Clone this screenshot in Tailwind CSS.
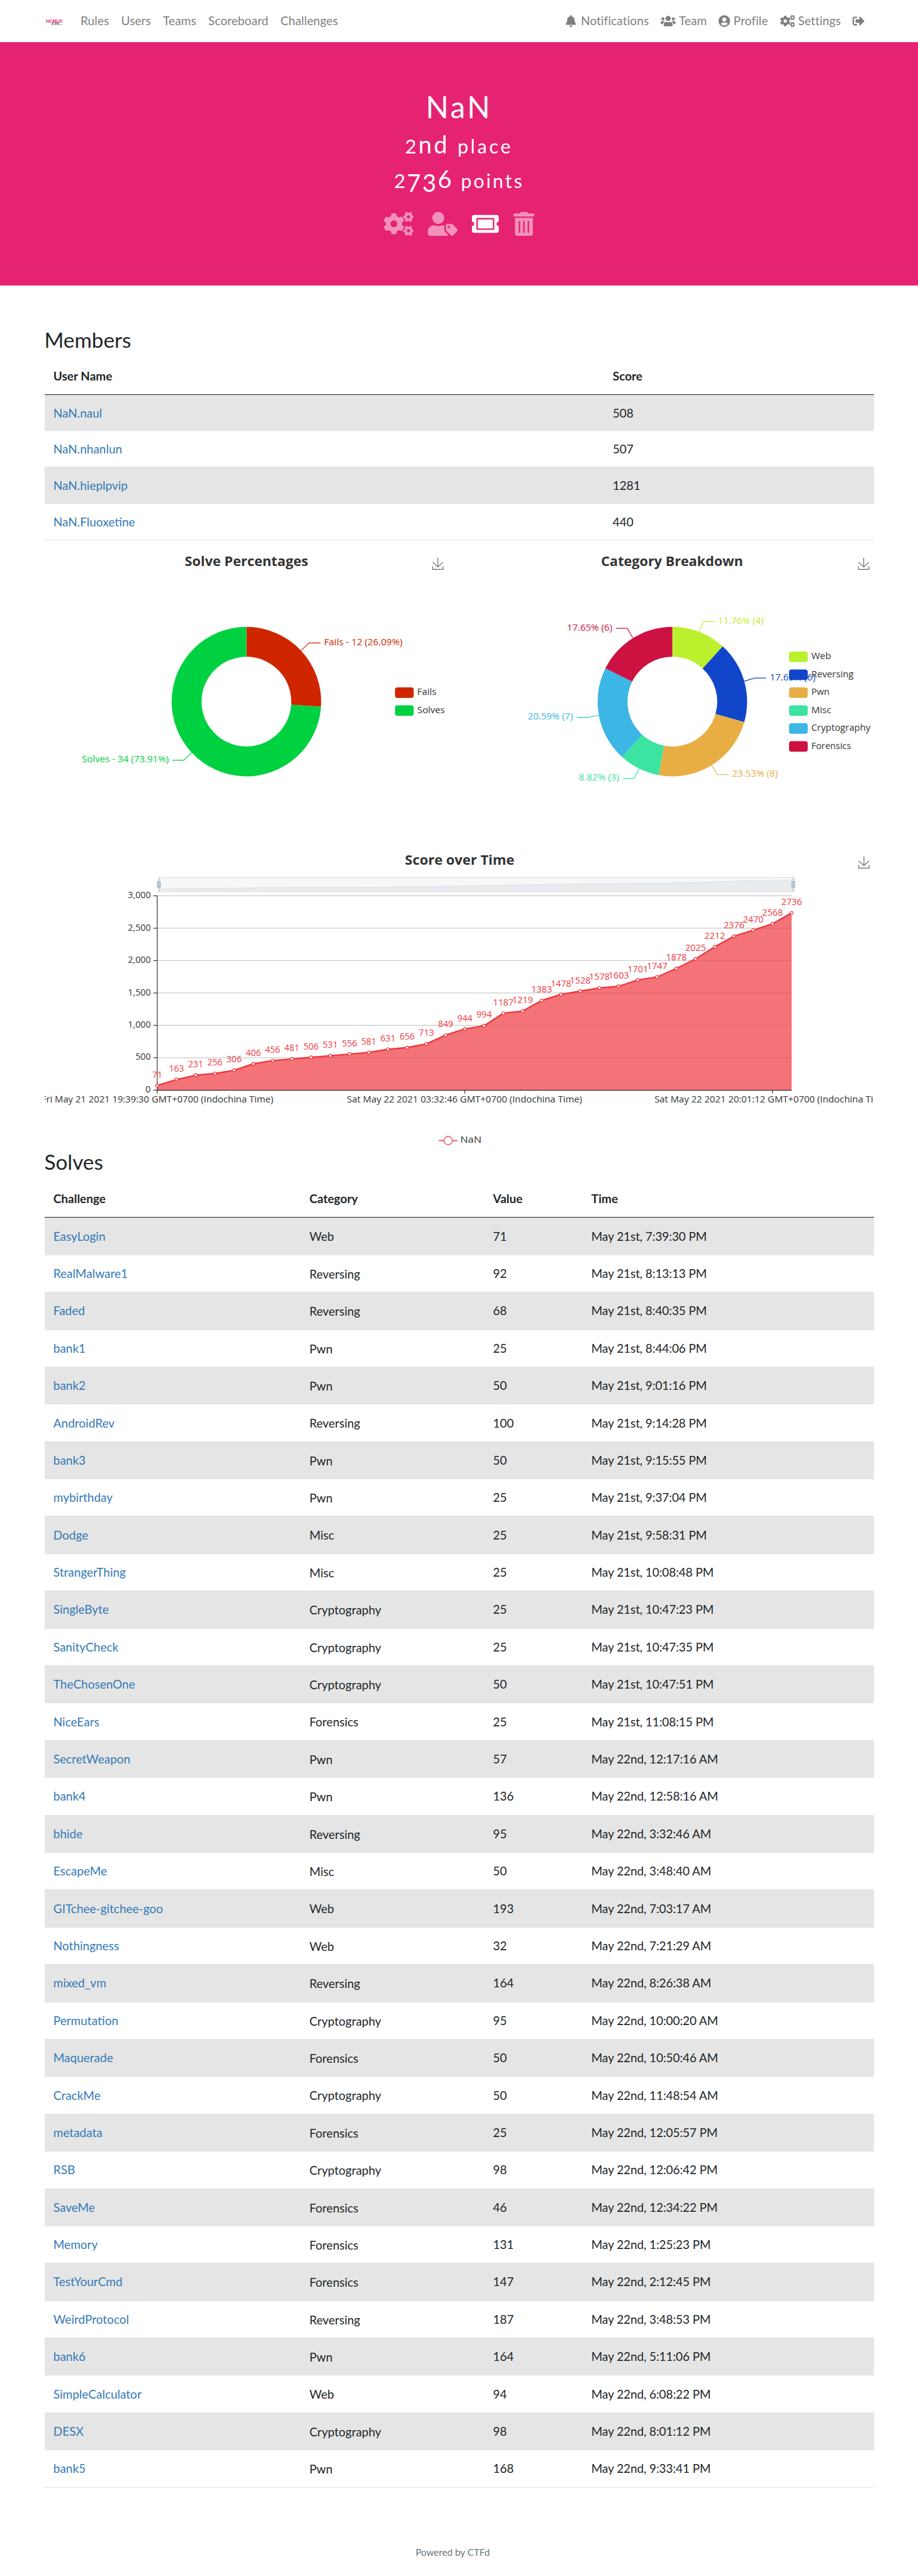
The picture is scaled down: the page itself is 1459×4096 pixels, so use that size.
<!DOCTYPE html>
<html lang="en">
<head>
<meta charset="utf-8">
<title>NaN - HCMUS CTF</title>
<script src="https://cdn.jsdelivr.net/npm/@tailwindcss/browser@4"></script>
</head>
<body class="bg-white font-['Lato',sans-serif] text-[19px] leading-[28.5px] text-[#212529] overflow-x-hidden">

<svg width="0" height="0" class="absolute">
  <defs>
    <symbol id="cogs" viewBox="0 0 640 512"><path fill="currentColor" d="M512.1 191l-8.2 14.3c-3 5.3-9.4 7.5-15.1 5.4-11.8-4.4-22.6-10.7-32.1-18.6-4.6-3.8-5.8-10.5-2.8-15.7l8.2-14.3c-6.9-8-12.3-17.3-15.9-27.4h-16.5c-6 0-11.2-4.3-12.2-10.3-2-12-2.1-24.6 0-37.1 1-6 6.2-10.4 12.2-10.4h16.5c3.6-10.1 9-19.4 15.9-27.4l-8.2-14.3c-3-5.2-1.9-11.9 2.8-15.7 9.5-7.9 20.4-14.2 32.1-18.6 5.700-2.100 12.100.1 15.100 5.400l8.200 14.300c10.500-1.900 21.200-1.900 31.700 0L552 6.300c3-5.300 9.400-7.500 15.100-5.400 11.800 4.400 22.600 10.700 32.100 18.600 4.600 3.800 5.800 10.500 2.800 15.700l-8.200 14.300c6.900 8 12.300 17.300 15.900 27.400h16.500c6 0 11.200 4.300 12.200 10.300 2 12 2.100 24.600 0 37.100-1 6-6.200 10.400-12.200 10.400h-16.500c-3.600 10.100-9 19.400-15.900 27.400l8.200 14.300c3 5.200 1.900 11.900-2.800 15.700-9.500 7.900-20.400 14.200-32.100 18.600-5.700 2.100-12.100-.1-15.100-5.400l-8.200-14.300c-10.400 1.900-21.200 1.900-31.700 0zm-10.500-58.800c38.500 29.600 82.400-14.300 52.800-52.800-38.500-29.700-82.400 14.300-52.800 52.800zM386.300 286.100l33.700 16.800c10.100 5.800 14.500 18.100 10.500 29.100-8.900 24.200-26.400 46.400-42.600 65.800-7.400 8.900-20.200 11.100-30.300 5.300l-29.100-16.800c-16 13.700-34.600 24.600-54.900 31.700v33.600c0 11.600-8.300 21.600-19.700 23.600-24.600 4.200-50.400 4.400-75.900 0-11.500-2-20-11.900-20-23.600V418c-20.300-7.200-38.900-18-54.900-31.700L74 403c-10 5.800-22.900 3.600-30.300-5.300-16.200-19.400-33.300-41.600-42.200-65.700-4-10.900.4-23.200 10.500-29.100l33.300-16.800c-3.900-20.900-3.900-42.400 0-63.400L12 205.800c-10.100-5.800-14.600-18.100-10.500-29 8.900-24.200 26-46.400 42.200-65.800 7.400-8.900 20.200-11.100 30.300-5.300l29.100 16.800c16-13.700 34.600-24.600 54.900-31.700V57.100c0-11.500 8.200-21.500 19.600-23.500 24.600-4.200 50.500-4.400 76-.1 11.500 2 20 11.900 20 23.600v33.600c20.300 7.200 38.900 18 54.900 31.700l29.100-16.800c10-5.800 22.900-3.600 30.300 5.300 16.200 19.400 33.200 41.600 42.100 65.800 4 10.900.1 23.200-10 29.100l-33.700 16.800c3.900 21 3.900 42.500 0 63.500zm-117.600 21.100c59.200-77-28.700-164.900-105.700-105.700-59.200 77 28.700 164.900 105.700 105.700zm243.400 182.700l-8.200 14.300c-3 5.300-9.400 7.500-15.100 5.400-11.800-4.400-22.600-10.700-32.100-18.600-4.600-3.800-5.800-10.500-2.800-15.700l8.200-14.300c-6.900-8-12.300-17.300-15.900-27.400h-16.500c-6 0-11.200-4.300-12.200-10.300-2-12-2.100-24.600 0-37.100 1-6 6.200-10.400 12.200-10.400h16.500c3.600-10.100 9-19.400 15.900-27.400l-8.200-14.300c-3-5.200-1.900-11.900 2.800-15.700 9.500-7.900 20.400-14.200 32.100-18.600 5.700-2.100 12.100.1 15.100 5.400l8.200 14.300c10.500-1.900 21.200-1.900 31.700 0l8.200-14.300c3-5.300 9.400-7.500 15.100-5.400 11.800 4.400 22.600 10.700 32.100 18.600 4.600 3.800 5.800 10.500 2.800 15.700l-8.200 14.300c6.900 8 12.300 17.300 15.900 27.400h16.500c6 0 11.200 4.300 12.200 10.300 2 12 2.100 24.600 0 37.100-1 6-6.200 10.400-12.200 10.400h-16.500c-3.600 10.100-9 19.400-15.900 27.400l8.200 14.300c3 5.200 1.900 11.900-2.800 15.700-9.500 7.900-20.400 14.200-32.100 18.600-5.700 2.100-12.100-.1-15.100-5.400l-8.200-14.300c-10.400 1.900-21.200 1.900-31.700 0zM501.600 431c38.500 29.600 82.400-14.300 52.800-52.800-38.500-29.600-82.400 14.300-52.800 52.800z"/></symbol>
    <symbol id="usertag" viewBox="0 0 640 512"><path fill="currentColor" d="M630.6 364.9l-90.3-90.2c-12-12-28.3-18.7-45.3-18.7h-79.3c-17.7 0-32 14.3-32 32v79.2c0 17 6.7 33.2 18.7 45.2l90.3 90.2c12.5 12.5 32.8 12.5 45.3 0l92.5-92.5c12.6-12.5 12.6-32.700.1-45.200zm-182.800-21c-13.300 0-24-10.700-24-24s10.700-24 24-24 24 10.700 24 24c0 13.200-10.700 24-24 24zm-223.800-88c70.700 0 128-57.300 128-128C352 57.300 294.700 0 224 0S96 57.300 96 128c0 70.600 57.300 127.900 128 127.900zm127.800 111.200V294c-12.200-3.600-24.900-6.200-38.200-6.200h-16.700c-22.200 10.200-46.900 16-72.900 16s-50.600-5.800-72.900-16h-16.700C60.200 287.900 0 348.100 0 422.300v41.600c0 26.500 21.500 48 48 48h352c15.500 0 29.100-7.500 37.900-18.900l-58-58c-18.100-18.100-28.100-42.200-28.100-67.900z"/></symbol>
    <symbol id="ticket" viewBox="0 0 576 512"><path fill="currentColor" d="M128 160h320v192H128V160zm400 96c0 26.51 21.49 48 48 48v96c0 26.51-21.49 48-48 48H48c-26.510 0-48-21.490-48-48v-96c26.510 0 48-21.490 48-48s-21.490-48-48-48v-96c0-26.510 21.490-48 48-48h480c26.510 0 48 21.490 48 48v96c-26.510 0-48 21.490-48 48zm-48-104c0-13.255-10.745-24-24-24H120c-13.255 0-24 10.745-24 24v208c0 13.255 10.745 24 24 24h336c13.255 0 24-10.745 24-24V152z"/></symbol>
    <symbol id="trash" viewBox="0 0 448 512"><path fill="currentColor" d="M32 464a48 48 0 0 0 48 48h288a48 48 0 0 0 48-48V128H32zm272-256a16 16 0 0 1 32 0v224a16 16 0 0 1-32 0zm-96 0a16 16 0 0 1 32 0v224a16 16 0 0 1-32 0zm-96 0a16 16 0 0 1 32 0v224a16 16 0 0 1-32 0zM432 32H312l-9.400-18.700A24 24 0 0 0 281.100 0H166.800a23.720 23.720 0 0 0-21.400 13.300L136 32H16A16 16 0 0 0 0 48v32a16 16 0 0 0 16 16h416a16 16 0 0 0 16-16V48a16 16 0 0 0-16-16z"/></symbol>
    <symbol id="bell" viewBox="0 0 448 512"><path fill="currentColor" d="M224 512c35.320 0 63.970-28.650 63.970-64H160.030c0 35.350 28.650 64 63.970 64zm215.390-149.710c-19.320-20.760-55.470-51.990-55.470-154.290 0-77.700-54.480-139.900-127.940-155.160V32c0-17.670-14.320-32-31.980-32s-31.980 14.330-31.980 32v20.840C118.560 68.100 64.080 130.300 64.080 208c0 102.300-36.150 133.530-55.470 154.290-6 6.450-8.660 14.160-8.610 21.710.11 16.400 12.980 32 32.100 32h383.800c19.120 0 32-15.600 32.100-32 .05-7.550-2.610-15.270-8.610-21.710z"/></symbol>
    <symbol id="users" viewBox="0 0 640 512"><path fill="currentColor" d="M96 224c35.300 0 64-28.700 64-64s-28.700-64-64-64-64 28.700-64 64 28.700 64 64 64zm448 0c35.300 0 64-28.700 64-64s-28.700-64-64-64-64 28.700-64 64 28.700 64 64 64zm32 32h-64c-17.600 0-33.500 7.100-45.100 18.600 40.300 22.100 68.900 62 75.100 109.400h66c17.700 0 32-14.300 32-32v-32c0-35.300-28.700-64-64-64zm-256 0c61.900 0 112-50.100 112-112S381.900 32 320 32 208 82.100 208 144s50.100 112 112 112zm76.800 32h-8.300c-20.800 10-43.900 16-68.500 16s-47.600-6-68.500-16h-8.300C179.600 288 128 339.600 128 403.200V432c0 26.500 21.500 48 48 48h288c26.500 0 48-21.500 48-48v-28.800c0-63.600-51.600-115.200-115.200-115.200zm-223.700-13.400C161.500 263.100 145.600 256 128 256H64c-35.300 0-64 28.700-64 64v32c0 17.700 14.300 32 32 32h65.900c6.300-47.400 34.900-87.300 75.200-109.400z"/></symbol>
    <symbol id="usercircle" viewBox="0 0 496 512"><path fill="currentColor" d="M248 8C111 8 0 119 0 256s111 248 248 248 248-111 248-248S385 8 248 8zm0 96c48.600 0 88 39.400 88 88s-39.400 88-88 88-88-39.400-88-88 39.400-88 88-88zm0 344c-58.700 0-111.300-26.600-146.500-68.200 18.800-35.400 55.600-59.800 98.500-59.800 2.400 0 4.800.4 7.100 1.100 13 4.200 26.600 6.900 40.900 6.900 14.300 0 28-2.700 40.900-6.900 2.300-.7 4.700-1.100 7.100-1.100 42.900 0 79.700 24.400 98.500 59.800C359.300 421.400 306.700 448 248 448z"/></symbol>
    <symbol id="signout" viewBox="0 0 512 512"><path fill="currentColor" d="M497 273L329 441c-15 15-41 4.500-41-17v-96H152c-13.300 0-24-10.700-24-24v-96c0-13.300 10.700-24 24-24h136V88c0-21.400 25.900-32 41-17l168 168c9.300 9.400 9.300 24.600 0 34zM192 436v-40c0-6.600-5.400-12-12-12H96c-17.700 0-32-14.300-32-32V160c0-17.700 14.300-32 32-32h84c6.600 0 12-5.400 12-12V76c0-6.600-5.400-12-12-12H96c-53 0-96 43-96 96v192c0 53 43 96 96 96h84c6.600 0 12-5.400 12-12z"/></symbol>
    <symbol id="download" viewBox="0 0 24 26"><path fill="none" stroke="#666" stroke-width="1.5" d="M12 1V19.500M1.500 10L12 19.500L22.500 10M1.500 18V24.500H22.500V18"/></symbol>
  </defs>
</svg>

<nav class="flex h-[66.5px] items-center pl-[70.500px] pr-[84.700px] tracking-[0.1px] text-[#7f7f7f]">
  <svg class="h-[22px] w-[57.500px] shrink-0 overflow-visible tracking-normal" viewBox="0 0 57.500 22">
    <text x="2" y="14.200" class="font-['Liberation_Sans'] text-[7px] font-bold italic" fill="#e62272" textLength="26" lengthAdjust="spacingAndGlyphs">HCMUS</text>
    <text x="11" y="18.200" class="font-['Liberation_Sans'] text-[5px] font-bold italic" fill="#333" textLength="12" lengthAdjust="spacingAndGlyphs">CTF</text>
    <path d="M21.500 16.800H28" stroke="#999" stroke-width="1"/>
  </svg>
  <div class="flex gap-[19.200px]">
    <a>Rules</a><a>Users</a><a>Teams</a><a>Scoreboard</a><a>Challenges</a>
  </div>
  <div class="ml-auto flex items-center gap-[19px]">
    <a class="flex items-center gap-[7.500px]"><svg class="h-[19px] w-[16.600px]"><use href="#bell"/></svg>Notifications</a>
    <a class="flex items-center gap-[5px]"><svg class="h-[19px] w-[23.800px]"><use href="#users"/></svg>Team</a>
    <a class="flex items-center gap-[5px]"><svg class="h-[19px] w-[18.400px]"><use href="#usercircle"/></svg>Profile</a>
    <a class="flex items-center gap-[5px]"><svg class="h-[19px] w-[23.800px]"><use href="#cogs"/></svg>Settings</a>
    <svg class="h-[19px] w-[19px]"><use href="#signout"/></svg>
  </div>
</nav>

<header class="flex h-[387.300px] flex-col items-center bg-[#e62272] pt-[74.300px] text-white">
  <h1 class="mb-[9.500px] h-[57px] text-[47.500px] leading-[57px] tracking-[3.500px]">NaN</h1>
  <h2 class="mb-[9.500px] h-[45.600px] text-[38px] leading-[45.600px] tracking-[3.300px]"><span class="text-[31px] leading-none">2</span>nd <small class="text-[30.400px] leading-none tracking-[3.700px]">place</small></h2>
  <h2 class="h-[45.600px] text-[38px] leading-[45.600px] tracking-[2.500px]"><span class="text-[31px] leading-none">2</span><span class="relative top-[6px] leading-none">73</span>6 <small class="text-[30.400px] leading-none tracking-[3px]">points</small></h2>
  <div class="mt-[29.500px] flex gap-[22.800px]">
    <svg class="h-[38px] w-[47.500px] opacity-50"><use href="#cogs"/></svg>
    <svg class="h-[38px] w-[47.500px] opacity-50"><use href="#usertag"/></svg>
    <svg class="h-[38px] w-[42.800px]"><use href="#ticket"/></svg>
    <svg class="h-[38px] w-[33.300px] opacity-50"><use href="#trash"/></svg>
  </div>
</header>

<main class="ml-[70.500px] w-[1318.700px] pt-[66.500px]">
  <h3 class="mb-[9.500px] h-[39.900px] pt-[0.500px] text-[33.270px] leading-[39.900px]">Members</h3>
  <div id="members">
    <div class="grid h-[57.820px] grid-cols-[889px_1fr] border-b border-[#212529] pt-[14.800px] font-bold">
      <div class="pl-[14.260px]">User Name</div><div class="pl-[14.260px]">Score</div>
    </div>
  </div>

  <div class="grid grid-cols-2">
    <svg id="pie1" class="block h-[475.240px] w-full font-['Open_Sans'] text-[18.600px]" viewBox="89 1084 832.500 600"></svg>
    <svg id="pie2" class="block h-[475.240px] w-full font-['Open_Sans'] text-[18.600px]" viewBox="921.500 1084 832.500 600"></svg>
  </div>
  <svg id="line" class="block h-[493.600px] w-full overflow-hidden font-['Open_Sans'] text-[18.600px]" viewBox="89 1684 1665 623.200"></svg>

  <h3 class="mb-[9.500px] h-[39.900px] pt-[0.800px] text-[33.270px] leading-[39.900px]">Solves</h3>
  <div id="solves">
    <div class="grid h-[59.400px] grid-cols-[406.900px_291.800px_156.400px_1fr] border-b border-[#212529] pt-[15px] font-bold">
      <div class="pl-[14.260px]">Challenge</div><div class="pl-[14.260px]">Category</div><div class="pl-[14.260px]">Value</div><div class="pl-[14.260px]">Time</div>
    </div>
  </div>
</main>
<footer class="pt-[91px] pr-[20px] text-center text-[15.200px] leading-[23px] text-[#6c757d]">Powered by CTFd</footer>

<script>
const members = [['NaN.naul', 508], ['NaN.nhanlun', 507], ['NaN.hieplpvip', 1281], ['NaN.Fluoxetine', 440]];
document.getElementById('members').insertAdjacentHTML('beforeend', members.map(([n, s]) => `
  <div class="grid h-[57.820px] grid-cols-[889px_1fr] border-b border-[#dee2e6] pt-[15px] odd:bg-white even:bg-[#e5e5e5]">
    <div class="pl-[14.260px] text-[#337ab7]">${n}</div><div class="pl-[14.260px]">${s}</div>
  </div>`).join(''));

const solves = `EasyLogin|Web|71|May 21st, 7:39:30 PM
RealMalware1|Reversing|92|May 21st, 8:13:13 PM
Faded|Reversing|68|May 21st, 8:40:35 PM
bank1|Pwn|25|May 21st, 8:44:06 PM
bank2|Pwn|50|May 21st, 9:01:16 PM
AndroidRev|Reversing|100|May 21st, 9:14:28 PM
bank3|Pwn|50|May 21st, 9:15:55 PM
mybirthday|Pwn|25|May 21st, 9:37:04 PM
Dodge|Misc|25|May 21st, 9:58:31 PM
StrangerThing|Misc|25|May 21st, 10:08:48 PM
SingleByte|Cryptography|25|May 21st, 10:47:23 PM
SanityCheck|Cryptography|25|May 21st, 10:47:35 PM
TheChosenOne|Cryptography|50|May 21st, 10:47:51 PM
NiceEars|Forensics|25|May 21st, 11:08:15 PM
SecretWeapon|Pwn|57|May 22nd, 12:17:16 AM
bank4|Pwn|136|May 22nd, 12:58:16 AM
bhide|Reversing|95|May 22nd, 3:32:46 AM
EscapeMe|Misc|50|May 22nd, 3:48:40 AM
GITchee-gitchee-goo|Web|193|May 22nd, 7:03:17 AM
Nothingness|Web|32|May 22nd, 7:21:29 AM
mixed_vm|Reversing|164|May 22nd, 8:26:38 AM
Permutation|Cryptography|95|May 22nd, 10:00:20 AM
Maquerade|Forensics|50|May 22nd, 10:50:46 AM
CrackMe|Cryptography|50|May 22nd, 11:48:54 AM
metadata|Forensics|25|May 22nd, 12:05:57 PM
RSB|Cryptography|98|May 22nd, 12:06:42 PM
SaveMe|Forensics|46|May 22nd, 12:34:22 PM
Memory|Forensics|131|May 22nd, 1:25:23 PM
TestYourCmd|Forensics|147|May 22nd, 2:12:45 PM
WeirdProtocol|Reversing|187|May 22nd, 3:48:53 PM
bank6|Pwn|164|May 22nd, 5:11:06 PM
SimpleCalculator|Web|94|May 22nd, 6:08:22 PM
DESX|Cryptography|98|May 22nd, 8:01:12 PM
bank5|Pwn|168|May 22nd, 9:33:41 PM`.split('\n').map(r => r.split('|'));
document.getElementById('solves').insertAdjacentHTML('beforeend', solves.map(([n, c, v, t]) => `
  <div class="grid h-[59.406px] grid-cols-[406.900px_291.800px_156.400px_1fr] border-b border-[#dee2e6] pt-[15.200px] odd:bg-white even:bg-[#e5e5e5]">
    <div class="pl-[14.260px] text-[#337ab7]">${n}</div><div class="pl-[14.260px] pt-[0.800px]">${c}</div><div class="pl-[14.260px]">${v}</div><div class="pl-[14.260px] tracking-[-0.1px]">${t}</div>
  </div>`).join(''));

// text run spanning x1..x2
const T = (x1, x2, y, s, fill = '#333', extra = '') =>
  `<text x="${x1}" y="${y}" fill="${fill}" textLength="${x2 - x1}" lengthAdjust="spacingAndGlyphs" ${extra}>${s}</text>`;
const title = (x1, x2, y, s) => T(x1, x2, y, s, '#333', 'class="text-[27px] font-bold"');
const dl = (x, y) => `<use href="#download" x="${x}" y="${y}" width="24" height="26"/>`;
const leader = (p, c) => `<polyline points="${p}" fill="none" stroke="${c}" stroke-width="1.5"/>`;
const swatch = (x, y, c) => `<rect x="${x}" y="${y}" width="37.500" height="21" rx="5" fill="${c}"/>`;
function donut(cx, cy, R, r, data) {
  const total = data.reduce((a, d) => a + d[0], 0);
  let a = 0;
  const p = (q, t) => `${(cx + q * Math.sin(t)).toFixed(2)} ${(cy - q * Math.cos(t)).toFixed(2)}`;
  return data.map(([v, c]) => {
    const b = a + v / total * 2 * Math.PI, big = b - a > Math.PI ? 1 : 0;
    const d = `M${p(R, a)}A${R} ${R} 0 ${big} 1 ${p(R, b)}L${p(r, b)}A${r} ${r} 0 ${big} 0 ${p(r, a)}Z`;
    a = b;
    return `<path d="${d}" fill="${c}"/>`;
  }).join('');
}
const red = '#cf2600', green = '#00d140';
document.getElementById('pie1').innerHTML =
  title(370, 618, 1136, 'Solve Percentages') + dl(866, 1118) +
  donut(493.8, 1408, 150, 90, [[12, red], [34, green]]) +
  leader('603.5,1305.5 619.5,1290.2 642.5,1290.2', red) + T(649.5, 807, 1295.4, 'Fails - 12 (26.09%)', red) +
  leader('384.8,1510 368.1,1525.8 345.8,1525.8', green) + T(163.5, 338, 1530.2, 'Solves - 34 (73.91%)', green) +
  swatch(792, 1379.5, red) + T(836.5, 875, 1395.2, 'Fails') +
  swatch(792, 1415.5, green) + T(836.8, 892, 1431, 'Solves');

const C = { Web: '#bbf02c', Rev: '#1246ca', Pwn: '#e8ae44', Misc: '#3be4a0', Cry: '#3bb6e5', For: '#cd1140' };
document.getElementById('pie2').innerHTML =
  title(1206, 1491, 1136, 'Category Breakdown') + dl(1721, 1118) +
  donut(1349, 1408, 150, 90, [[4, C.Web], [6, C.Rev], [8, C.Pwn], [3, C.Misc], [7, C.Cry], [6, C.For]]) +
  leader('1403,1268 1411.2,1247.3 1434.2,1247.3', C.Web) + T(1440.5, 1532, 1252, '11.76% (4)', C.Web) +
  leader('1493.4,1367 1514.3,1360.6 1537.2,1360.6', C.Rev) + T(1544.5, 1636, 1366, '17.65% (6)', C.Rev) +
  leader('1427.6,1535.6 1439.8,1554.6 1462.2,1554.6', C.Pwn) + T(1469, 1560.5, 1559, '23.53% (8)', C.Pwn) +
  leader('1282.1,1542.3 1272.4,1562.3 1250,1562.3', C.Misc) + T(1161.5, 1242, 1566.5, '8.82% (3)', C.Misc) +
  leader('1202,1435.3 1180,1439.5 1157.7,1439.5', C.Cry) + T(1059, 1149.5, 1444.2, '20.59% (7)', C.Cry) +
  leader('1269.9,1280.3 1258.7,1261 1236.2,1261', C.For) + T(1137.5, 1228.5, 1266, '17.65% (6)', C.For) +
  [['Web', 1667.5, C.Web], ['Reversing', 1712.5, C.Rev], ['Pwn', 1664.5, C.Pwn], ['Misc', 1668, C.Misc], ['Cryptography', 1746.5, C.Cry], ['Forensics', 1707.5, C.For]]
    .map(([n, e, c], i) => swatch(1583.2, 1307.5 + 36 * i, c) + T(1628, e, 1323.2 + 36 * i, n)).join('');

const scores = [71,163,231,256,306,406,456,481,506,531,556,581,631,656,713,849,944,994,1187,1219,1383,1478,1528,1578,1603,1701,1747,1878,2025,2212,2376,2470,2568,2736];
const X = i => +(314.9 + i * 38.58).toFixed(1), Y = v => +(2188.2 - v * 0.13).toFixed(1);
const pts = scores.map((v, i) => `${X(i)},${Y(v)}`).join(' ');
const mini = scores.map((v, i) => `${(318.3 + i * 38.576).toFixed(1)},${(1784.9 - v * 0.0068).toFixed(1)}`).join(' ');
const ink = '#ee383f';
const handle = x => `<path d="M${x} 1760.500V1790.500" stroke="#a7b7cc" stroke-width="1.500"/><rect x="${x - 3.7}" y="1769" width="7.400" height="13.200" fill="#a7b7cc"/><path d="M${x - 2} 1773.400h4M${x - 2} 1778h4" stroke="#fff" stroke-width="1.200"/>`;
let g = title(812, 1031.5, 1735.7, 'Score over Time') + dl(1721, 1718) +
  `<rect x="318.300" y="1761.300" width="1273" height="28.500" fill="#f6f7f9" stroke="#ddd" stroke-width="1.500"/>
   <polygon points="318.300,1789 ${mini} 1591.300,1789" fill="#e8ecef"/><polyline points="${mini}" fill="none" stroke="#d3d9df" stroke-width="1"/>` +
  handle(318.3) + handle(1591.3);
for (let v = 0; v <= 3000; v += 500) {
  const s = v.toLocaleString('en-US'), w = v >= 1000 ? 46 : v ? 31 : 10.5;
  g += `<path d="M314.900 ${Y(v)}H1588" stroke="#ccc" stroke-width="1.500"/><path d="M307 ${Y(v)}H314.900" stroke="#333" stroke-width="1.500"/>` + T(302 - w, 302, Y(v) + 4.6, s);
}
g += `<polygon points="314.900,2188.200 ${pts} 1588,2188.200" fill="${ink}" fill-opacity=".7"/>
  <path d="M314.900 1797.500V2195.500M314.900 2188.500H1588M932.200 2188V2195.500M1549.400 2188V2195.500" fill="none" stroke="#333" stroke-width="1.500"/>
  <polyline points="${pts}" fill="none" stroke="${ink}" stroke-width="3"/>`;
scores.forEach((v, i) => {
  const w = { 2: 20, 3: 30.5, 4: 41.5 }[String(v).length];
  g += `<circle cx="${X(i)}" cy="${Y(v)}" r="3" fill="#fff" stroke="${ink}" stroke-width="1.500"/>` + T(X(i) - w / 2, X(i) + w / 2, Y(v) - 15.8, v, ink);
});
g += T(82.4, 547.8, 2213.6, 'Fri May 21 2021 19:39:30 GMT+0700 (Indochina Time)') +
  T(695.4, 1167.5, 2213.6, 'Sat May 22 2021 03:32:46 GMT+0700 (Indochina Time)') +
  T(1312.7, 1785, 2213.6, 'Sat May 22 2021 20:01:12 GMT+0700 (Indochina Time)') +
  `<path d="M880 2289.500H917.500" stroke="${ink}" stroke-width="2"/><circle cx="898.700" cy="2289.500" r="8.500" fill="#fff" stroke="${ink}" stroke-width="1.500"/>` +
  T(923, 965.5, 2294, 'NaN');
document.getElementById('line').innerHTML = g;
</script>
</body>
</html>
